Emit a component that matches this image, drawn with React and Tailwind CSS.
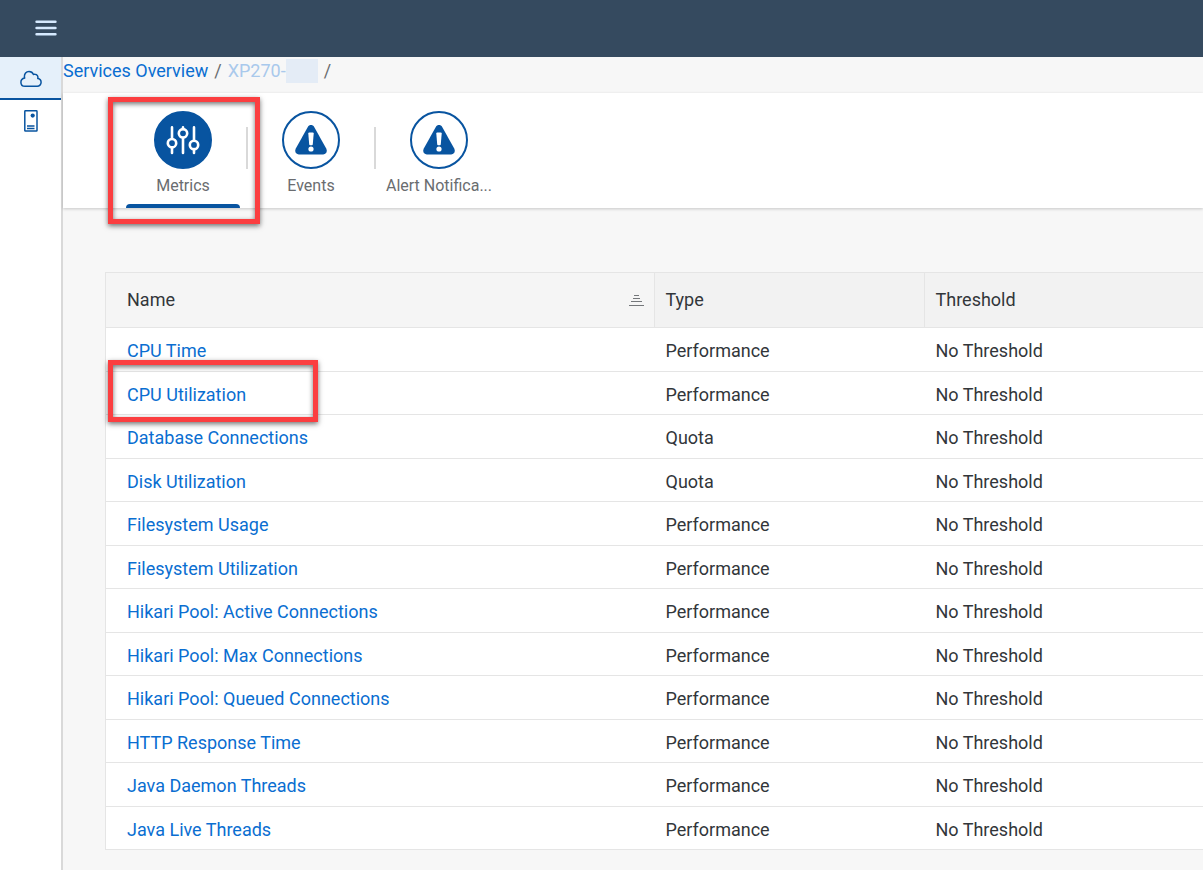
const metrics = [
  ['CPU Time', 'Performance'],
  ['CPU Utilization', 'Performance'],
  ['Database Connections', 'Quota'],
  ['Disk Utilization', 'Quota'],
  ['Filesystem Usage', 'Performance'],
  ['Filesystem Utilization', 'Performance'],
  ['Hikari Pool: Active Connections', 'Performance'],
  ['Hikari Pool: Max Connections', 'Performance'],
  ['Hikari Pool: Queued Connections', 'Performance'],
  ['HTTP Response Time', 'Performance'],
  ['Java Daemon Threads', 'Performance'],
  ['Java Live Threads', 'Performance'],
];

const highlight =
  'pointer-events-none absolute z-10 border-5 border-[#fb3e40] shadow-[0_2px_5px_rgba(0,0,0,0.55),inset_0_2px_5px_rgba(0,0,0,0.55)]';

function MenuIcon() {
  return (
    <svg width="22" height="16" viewBox="0 0 22 16" fill="none" stroke="#d6eaff" strokeWidth="2.6" strokeLinecap="round" aria-hidden="true">
      <path d="M1.6 1.8H20.4M1.6 8H20.4M1.6 14.2H20.4" />
    </svg>
  );
}

function CloudIcon() {
  return (
    <svg width="22" height="18" viewBox="0 0 22 18" fill="none" stroke="#0854a0" strokeWidth="1.5" strokeLinejoin="round" aria-hidden="true">
      <path d="M5 16.3H17.2A3.9 3.9 0 0 0 21.1 12.3C21.1 10.2 19.6 8.8 17.8 8.5C18.4 6.4 17.2 4.4 14.9 4.2C14.3 4.1 13.8 4.3 13.5 4.5C12.7 2.6 11.2 1.5 9 1.5C6.1 1.5 4.3 3.8 4.4 6.6C4.4 7.1 4.5 7.6 4.7 8C2.5 8.4 0.9 9.9 0.9 12.2C0.9 14.6 2.6 16.3 5 16.3Z" />
    </svg>
  );
}

function ServerIcon() {
  return (
    <svg width="14" height="22" viewBox="0 0 14 22" fill="none" stroke="#0854a0" strokeWidth="1.5" aria-hidden="true">
      <rect x="0.8" y="0.8" width="12.2" height="20.2" rx="0.6" />
      <circle cx="8.7" cy="5.6" r="2.1" fill="#0854a0" stroke="none" />
      <path d="M3 16H10.5M3 18.4H10.5" />
    </svg>
  );
}

function SlidersIcon() {
  return (
    <svg width="34" height="30" viewBox="0 0 34 30" fill="none" stroke="#fff" strokeWidth="2.6" strokeLinecap="round" aria-hidden="true">
      <path d="M6 2.4V13.5M6 22.5V28M17 2.4V4M17 13V28M28 2.4V15M28 24V28" />
      <circle cx="6" cy="18.2" r="4.2" />
      <circle cx="17" cy="8.3" r="4.2" />
      <circle cx="28" cy="20" r="4.2" />
    </svg>
  );
}

function AlertIcon() {
  return (
    <svg width="32" height="30" viewBox="0 0 32 30" aria-hidden="true">
      <path
        d="M12.8 1.9C14.3-.6 17.7-.6 19.2 1.9L31.2 23.6C32.7 26.4 31.2 29.4 28.2 29.4H3.8C.8 29.4-.7 26.4.8 23.6Z"
        fill="#0854a0"
      />
      <path d="M13.3 8.6Q13.3 7.6 14.3 7.6H17.7Q18.7 7.6 18.7 8.6L17.8 19.2Q17.7 20.2 16.9 20.2H15.1Q14.3 20.2 14.2 19.2Z" fill="#fff" />
      <circle cx="16" cy="24" r="2.6" fill="#fff" />
    </svg>
  );
}

function SortIcon() {
  return (
    <svg width="15" height="11" viewBox="0 0 15 11" stroke="#74777a" strokeWidth="1" aria-hidden="true">
      <path d="M5 0.5H10M4 3.5H11M2 6.5H13M0 10.5H15" />
    </svg>
  );
}

function Tab({ label, title, active, children }) {
  return (
    <button
      type="button"
      role="tab"
      title={title}
      aria-selected={Boolean(active)}
      className="relative flex w-[114px] flex-col items-center pt-[18px] text-base leading-5 text-[#6a6d70]"
    >
      <span
        className={`flex size-[58px] shrink-0 items-center justify-center rounded-full border-2 border-[#0854a0] ${active ? 'bg-[#0854a0]' : 'bg-white'}`}
      >
        {children}
      </span>
      <span className="mt-[7px] whitespace-nowrap">{label}</span>
      <span className={`mt-2 h-1 w-full shrink-0 rounded-t ${active ? 'bg-[#0854a0]' : ''}`} />
      {active && <span className={`${highlight} -left-[18px] -right-5 top-1 -bottom-4`} />}
    </button>
  );
}

function Divider() {
  return <span className="mx-1.5 mt-[34px] h-[42px] w-0.5 bg-[#d9d9d9]" />;
}

export default function App() {
  return (
    <div className="flex min-h-screen flex-col overflow-x-hidden bg-[#f7f7f7] font-['Roboto','Noto_Sans',sans-serif] text-[#32363a]">
      <header className="flex h-[57px] shrink-0 items-center bg-[#354a5f] pb-0.5 pl-[35px]">
        <button type="button" aria-label="Menu">
          <MenuIcon />
        </button>
      </header>
      <div className="flex grow">
        <nav aria-label="Main" className="flex w-[63px] shrink-0 flex-col border-r-2 border-[#d9d9d9] bg-white">
          <a href="#cloud" aria-label="Services" className="flex h-[43px] items-center justify-center border-b-2 border-[#0854a0] bg-[#e5f0fa] pt-0.5">
            <CloudIcon />
          </a>
          <a href="#systems" aria-label="Systems" className="flex h-[43px] items-center justify-center pb-0.5">
            <ServerIcon />
          </a>
        </nav>
        <main className="min-w-0 grow">
          <nav aria-label="Breadcrumb" className="flex h-9 gap-1.5 pt-0.5 text-lg leading-6 text-[#6a6d70]">
            <a href="#services" className="text-[#0a6ed1]">Services Overview</a>
            <span>/</span>
            <span className="flex text-[#a9c9ec]">
              XP270-
              <span className="h-6 w-8 bg-[#e4ecf6]" />
            </span>
            <span>/</span>
          </nav>
          <div role="tablist" className="flex h-[115px] bg-white pl-[63px] shadow-[0_1px_3px_rgba(0,0,0,0.2)]">
            <Tab label="Metrics" active>
              <SlidersIcon />
            </Tab>
            <Divider />
            <Tab label="Events">
              <AlertIcon />
            </Tab>
            <Divider />
            <Tab label="Alert Notifica...">
              <AlertIcon />
            </Tab>
          </div>
          <div className="pb-4 pl-[42px] pt-16">
            <table className="w-full table-fixed border-separate border-spacing-0 border-l border-t border-[#e5e5e5] bg-white text-left text-lg leading-6">
              <thead>
                <tr className="h-[55px] bg-[#f2f2f2]">
                  <th scope="col" className="w-1/2 border-b border-r border-[#e5e5e5] bg-[#f5f5f5] pl-[21px] pr-2.5 font-normal">
                    <span className="flex items-center justify-between">
                      Name
                      <button type="button" aria-label="Sort by name">
                        <SortIcon />
                      </button>
                    </span>
                  </th>
                  <th scope="col" className="w-[270px] border-b border-r border-[#e5e5e5] pl-[11px] font-normal">Type</th>
                  <th scope="col" className="border-b border-[#e5e5e5] pl-[11px] font-normal">Threshold</th>
                </tr>
              </thead>
              <tbody>
                {metrics.map(([name, type]) => (
                  <tr key={name} className="odd:h-11 even:h-[43px]">
                    <td className="relative border-b border-[#e5e5e5] pl-[21px] pt-[3px]">
                      <a href="#metric" className="text-[#0a6ed1]">{name}</a>
                      {name === 'CPU Utilization' && <span className={`${highlight} -bottom-2 -top-3 left-0.5 w-[210px]`} />}
                    </td>
                    <td className="border-b border-[#e5e5e5] pl-[11px] pt-[3px]">{type}</td>
                    <td className="border-b border-[#e5e5e5] pl-[11px] pt-[3px]">No Threshold</td>
                  </tr>
                ))}
              </tbody>
            </table>
          </div>
        </main>
      </div>
    </div>
  );
}
